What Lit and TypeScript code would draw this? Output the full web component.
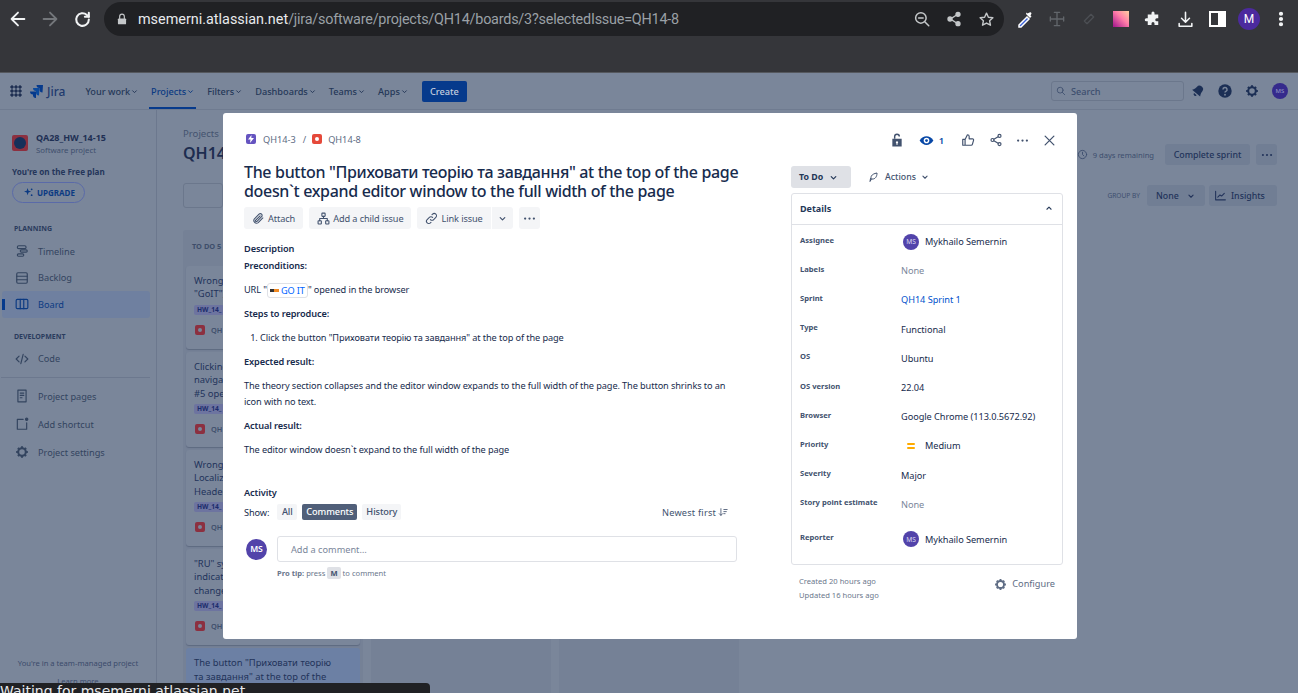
import { LitElement, html, css, svg } from "lit";
import { customElement } from "lit/decorators.js";

const icon = (w: number, body: unknown) =>
  html`<svg width=${w} height=${w} viewBox="0 0 24 24" fill="none" stroke="currentColor" stroke-width="2" stroke-linecap="round" stroke-linejoin="round">${body}</svg>`;

const gear = svg`<circle cx="12" cy="12" r="6.5" stroke-width="3.5"/><path d="M12 2v3M12 19v3M2 12h3M19 12h3M5 5l2 2M17 17l2 2M19 5l-2 2M7 17l-2 2" stroke-width="3.5" stroke-linecap="butt"/>`;
const chevron = svg`<path d="M7 10l5 5 5-5" stroke-width="2.6"/>`;
const dots = svg`<circle cx="5" cy="12" r="1.8" fill="currentColor" stroke="none"/><circle cx="12" cy="12" r="1.8" fill="currentColor" stroke="none"/><circle cx="19" cy="12" r="1.8" fill="currentColor" stroke="none"/>`;
const share = svg`<circle cx="18" cy="5" r="2.6"/><circle cx="6" cy="12" r="2.6"/><circle cx="18" cy="19" r="2.6"/><path d="M8.4 10.7l7.2-4.2M8.4 13.3l7.2 4.2"/>`;
const bugGlyph = html`<span class="bug"><i></i></span>`;

const details = [
  { label: "Labels", value: "None", kind: "none" },
  { label: "Sprint", value: "QH14 Sprint 1", kind: "link" },
  { label: "Type", value: "Functional", kind: "" },
  { label: "OS", value: "Ubuntu", kind: "" },
  { label: "OS version", value: "22.04", kind: "" },
  { label: "Browser", value: "Google Chrome (113.0.5672.92)", kind: "" },
];

const cards = [
  { lines: ["Wrong", '"GoIT")'], h: 83 },
  { lines: ["Clicking", "navigat", "#5 ope"], h: 95 },
  { lines: ["Wrong", "Localiz", "Header"], h: 96 },
  { lines: ['"RU" sy', "indicat", "change"], h: 96 },
];

@customElement("app-root")
export class AppRoot extends LitElement {
  static styles = css`
    :host {
      display: block;
      position: relative;
      width: 1298px;
      height: 693px;
      overflow: hidden;
      font-family: "Noto Sans", "Open Sans", sans-serif;
      color: #172b4d;
      background: #7a869a;
    }
    svg { display: block; flex: none; }

    /* browser */
    .chrome { height: 72px; background: #35363a; border-bottom: 1px solid #55585e; box-sizing: content-box; }
    .toolbar { display: flex; align-items: center; height: 36px; padding-top: 2px; box-sizing: border-box; color: #f1f3f4; }
    .nav-btns { display: flex; align-items: center; width: 104px; padding-left: 2px; box-sizing: border-box; flex: none; }
    .nav-btns > * { width: 32px; display: grid; place-items: center; }
    .nav-btns .off { color: #74777b; }
    .omni { flex: none; width: 900px; height: 34px; border-radius: 17px; background: #202124; display: flex; align-items: center; padding: 0 2px 0 11px; box-sizing: border-box; font: 14.4px "Roboto", sans-serif; }
    .omni .host { color: #e8eaed; margin-left: 9px; }
    .omni .path { color: #9aa0a6; letter-spacing: -0.22px; }
    .omni .right { margin-left: auto; display: flex; align-items: center; color: #c4c7c9; }
    .omni .right > * { width: 32px; display: grid; place-items: center; }
    .ext { display: flex; align-items: center; margin-left: 5px; }
    .ext > * { width: 32px; display: grid; place-items: center; flex: none; }
    .ext .dim1 { color: #62666b; }
    .ext .dim2 { color: #4c4f54; }
    .swatch { width: 16px; height: 16px; background: linear-gradient(45deg, #a0148c, #ff7ca8 55%, #ffd0a0); }
    .profile { width: 22px; height: 22px; border-radius: 50%; background: #4c2a9e; color: #fff; font: 12px "Roboto", sans-serif; display: grid; place-items: center; }

    /* jira page, dimmed */
    .page { height: 620px; display: flex; flex-direction: column; background: #7a869a; color: #25365a; }
    .topnav { height: 37px; display: flex; align-items: center; border-bottom: 1px solid #6f7b90; padding: 0 10px; font-size: 9.2px; font-weight: 500; flex: none; box-sizing: border-box; }
    .grid9 { width: 12px; height: 12px; background: radial-gradient(#1f2f52 1.5px, transparent 1.7px) 0 0 / 4px 4px; margin-right: 8px; }
    .logo { display: flex; align-items: center; gap: 3px; font-size: 12px; color: #1f3a6e; margin-right: 20px; }
    .menu { display: flex; gap: 12px; align-items: center; }
    .menu span { display: flex; align-items: center; color: #253858; position: relative; height: 36px; }
    .menu span.on { color: #0c3a82; }
    .menu span.on::after { content: ""; position: absolute; left: -2px; right: -1px; bottom: 0; height: 2px; background: #063a8c; }
    .create { margin-left: 13px; background: #063a8c; color: #c3cede; font-size: 9.2px; height: 21px; width: 45px; display: grid; place-items: center; border-radius: 2px; }
    .navright { margin-left: auto; display: flex; align-items: center; color: #1c2f55; gap: 13px; }
    .search { width: 133px; height: 20px; border: 1px solid #6b778c; border-radius: 3px; display: flex; align-items: center; gap: 5px; padding-left: 4px; box-sizing: border-box; font-size: 9.2px; color: #3d4e6e; margin-right: -6px; }
    .ava { width: 16px; height: 16px; border-radius: 50%; background: #352a8c; color: #8d8fc0; font-size: 6px; display: grid; place-items: center; }

    .body { flex: 1; display: flex; min-height: 0; }
    .side { width: 157px; flex: none; border-right: 1px solid #6c788e; box-sizing: border-box; padding-top: 21px; display: flex; flex-direction: column; font-size: 9.2px; }
    .proj { display: flex; gap: 8px; padding-left: 12px; align-items: center; }
    .proj-ic { width: 16px; height: 16px; background: #8c3040; border-radius: 2px; display: grid; place-items: center; }
    .proj-ic i { width: 12px; height: 12px; border-radius: 50%; background: #16305a; }
    .proj b { display: block; font-size: 9px; font-weight: 700; color: #1f3054; }
    .proj small { display: block; font-size: 7.8px; color: #3f4f6d; margin-top: 1px; }
    .plan { margin: 11px 0 0 12px; font-size: 8.1px; font-weight: 700; color: #25365a; }
    .upgrade { margin: 5px 0 0 12px; width: 73px; height: 21px; border: 1px solid #5a6aa8; border-radius: 11px; display: flex; align-items: center; gap: 4px; padding-left: 11px; box-sizing: border-box; font-size: 8px; font-weight: 700; color: #0c3a82; }
    .sec { margin: 21px 0 4px 14px; font-size: 7px; font-weight: 700; color: #2b3c5e; height: 10px; }
    .sec.tight { margin: 14px 0 4px 14px; }
    .item { display: flex; align-items: center; gap: 9px; height: 26.5px; margin: 0 6px 0 2px; padding-left: 13px; color: #33445f; border-radius: 3px; position: relative; flex: none; }
    .item.on { background: #6f80a0; color: #0c3a82; }
    .item.on::before { content: ""; position: absolute; left: 0; top: 8px; width: 3px; height: 11px; background: #063a8c; }
    .item.more { margin-top: 1.5px; }
    .rule { height: 1px; background: #6c788e; margin: 5px 6px 5px 1px; flex: none; }
    .team { margin-top: auto; text-align: center; font-size: 7.6px; color: #3a4b6b; padding-bottom: 7px; }
    .team div { margin-top: 8px; }

    .main { flex: 1; padding: 17px 0 0 26px; position: relative; min-width: 0; }
    .crumb { font-size: 9.6px; color: #44536f; }
    .h1 { font-size: 16px; font-weight: 600; color: #1d2d50; margin-top: 2px; line-height: 22px; width: 40px; overflow: hidden; white-space: nowrap; }
    .boardsearch { width: 40px; height: 25px; border: 1px solid #6b778c; border-radius: 3px; margin-top: 19px; box-sizing: border-box; }
    .cols { display: flex; gap: 8px; margin-top: 22px; }
    .col { width: 180px; height: 470px; background: #758196; border-radius: 3px 3px 0 0; padding: 3px 3px 0; box-sizing: border-box; flex: none; }
    .col h4 { margin: 0; font-size: 7.4px; font-weight: 700; color: #3e4e6b; padding: 8px 6px 0; height: 33px; box-sizing: border-box; }
    .card { background: #7a869a; border-radius: 3px; box-shadow: 0 1px 1px #5e6a80; padding: 8px; margin-bottom: 3px; font-size: 9.4px; line-height: 13.3px; color: #22335a; box-sizing: border-box; }
    .card.sel { background: #6c80a4; box-shadow: none; height: 60px; line-height: 14px; }
    .tag { display: block; width: fit-content; background: #6d74a0; font-size: 6.6px; line-height: 10px; font-weight: 700; padding: 0 3px; margin-top: 4px; border-radius: 2px; color: #1c2c6c; }
    .cardkey { display: flex; align-items: center; gap: 6px; margin-top: 10px; font-size: 7.4px; line-height: 10px; font-weight: 600; color: #3e4e6b; }
    .cardkey .sq { width: 10px; height: 10px; border-radius: 2px; background: #8c3040; display: grid; place-items: center; margin-left: 1px; }
    .cardkey .sq i { width: 4px; height: 4px; border-radius: 50%; background: #7a869a; }
    .right-tools { position: absolute; right: 21px; top: 34px; display: flex; align-items: center; color: #3d4e6e; }
    .remain { margin: 0 11px 0 5px; font-size: 7.6px; }
    .ghost { background: #717e94; height: 21px; border-radius: 3px; display: flex; align-items: center; padding: 0 9px; font-size: 8.8px; font-weight: 500; color: #22335a; box-sizing: border-box; }
    .ghost.sprint { width: 85px; justify-content: center; padding: 0; margin-right: 6px; }
    .ghost.square { width: 21px; justify-content: center; padding: 0; }
    .ghost.none { width: 58px; justify-content: space-between; }
    .ghost.insights { width: 68px; gap: 4px; padding: 0 5px; }
    .groupby { position: absolute; right: 21px; top: 75px; display: flex; align-items: center; gap: 4px; font-size: 6.6px; color: #3d4e6e; }
    .groupby .lab { margin-right: 3px; }

    /* the modal over the dimmed page */
    .modal {
      position: absolute; left: 223px; top: 113px; width: 854px; height: 526px;
      background: #fff; border-radius: 3px; color: #172b4d; display: flex; box-sizing: border-box;
    }
    .left { width: 568px; padding: 19px 0 0 21px; box-sizing: border-box; flex: none; }
    .crumbs { display: flex; align-items: center; font-size: 9.2px; color: #5e6c84; height: 14px; }
    .epic { width: 10px; height: 10px; background: #6554c0; border-radius: 2px; margin: 0 7px 0 2px; display: grid; place-items: center; }
    .bug { width: 10px; height: 10px; background: #e5493a; border-radius: 2px; display: grid; place-items: center; flex: none; }
    .bug i { width: 4px; height: 4px; border-radius: 50%; background: #fff; }
    .crumbs .sep { margin: 0 6px 0 7px; }
    .crumbs .bug { margin-right: 6px; }
    h1 { margin: 17px 0 0; font-size: 16px; line-height: 19px; font-weight: 500; color: #172b4d; letter-spacing: -0.33px; width: 500px; }
    .acts { display: flex; margin-top: 6px; gap: 6px; }
    .btn { display: flex; align-items: center; gap: 3px; height: 22px; padding: 0 8px; background: #f4f5f7; border-radius: 3px; font-size: 9.2px; letter-spacing: -0.1px; color: #42526e; box-sizing: border-box; }
    .split { display: flex; gap: 1px; }
    .split .btn:first-child { border-radius: 3px 0 0 3px; }
    .split .btn:last-child { border-radius: 0 3px 3px 0; padding: 0 5px; }
    .btn.more { padding: 0 3px; }
    .desc { font-size: 9.2px; letter-spacing: -0.1px; line-height: 16px; color: #172b4d; width: 493px; margin-top: 12px; }
    .desc b { display: block; font-weight: 600; }
    .desc p { margin: 0; }
    .desc .t1 { margin-top: 1px; }
    .gap { margin-top: 8px !important; }
    .smart { display: inline-flex; align-items: center; gap: 2px; border: 1px solid #dfe1e6; border-radius: 3px; padding: 0 2px; color: #0065ff; height: 13px; line-height: 13px; vertical-align: middle; }
    .flag { width: 9px; height: 3px; background: linear-gradient(90deg, #333 50%, #f08a24 50%); display: inline-block; }
    ol { margin: 8px 0 0; padding-left: 16px; }
    .desc b.activity { margin-top: 27px; }
    .show { display: flex; align-items: center; gap: 5px; margin-top: 3px; height: 16px; width: 493px; font-size: 9.2px; letter-spacing: -0.1px; color: #172b4d; }
    .show span { margin-right: 3px; }
    .tab { background: #f4f5f7; border-radius: 2px; padding: 0 4px; height: 16px; line-height: 16px; color: #42526e; font-weight: 500; min-width: 20px; box-sizing: border-box; text-align: center; }
    .tab.on { background: #505f79; color: #fff; }
    .newest { margin-left: auto; color: #42526e; display: flex; align-items: center; gap: 2px; margin-right: 9px; letter-spacing: 0.2px; }
    .comment { display: flex; margin-top: 16px; gap: 10px; align-items: center; width: 493px; padding-left: 2px; box-sizing: border-box; }
    .avatar { background: #5243aa; color: #fff; border-radius: 50%; display: grid; place-items: center; flex: none; font-weight: 600; }
    .avatar.lg { width: 21px; height: 21px; font-size: 8.6px; }
    .avatar.sm { width: 16px; height: 16px; font-size: 6.6px; font-weight: 400; color: #dcd8f0; }
    .input { flex: 1; height: 26px; border: 1px solid #dfe1e6; border-radius: 3px; padding-left: 13px; display: flex; align-items: center; font-size: 9.2px; color: #7a869a; box-sizing: border-box; }
    .tip { margin: 5px 0 0 33px; font-size: 7.6px; color: #6b778c; display: flex; align-items: center; gap: 2px; }
    .tip b { font-weight: 700; }
    .tip kbd { background: #dfe1e6; font: 700 7.6px "Noto Sans", sans-serif; color: #42526e; padding: 1px 3px; border-radius: 2px; }

    .rightcol { width: 286px; flex: none; padding: 0 14px 0 0; box-sizing: border-box; }
    .tools { display: flex; align-items: center; justify-content: flex-end; height: 14px; margin-top: 20px; color: #42526e; padding-right: 6px; }
    .tools > * { margin-left: 12px; }
    .tools .shr { margin-left: 14px; }
    .eye { display: flex; align-items: center; gap: 5px; color: #0747a6; font-size: 9.4px; font-weight: 600; margin-left: 15px; margin-right: 5px; }
    .status { display: flex; align-items: center; margin-top: 19px; height: 22px; }
    .todo { width: 60px; height: 22px; background: #dfe1e6; border-radius: 3px; display: flex; align-items: center; gap: 5px; padding-left: 8px; box-sizing: border-box; font-size: 8.8px; font-weight: 700; color: #253858; }
    .actions { display: flex; align-items: center; gap: 4px; margin-left: 16px; font-size: 8.8px; color: #42526e; font-weight: 500; }
    .actions span { margin-left: 2px; }
    .panel { margin-top: 5px; width: 272px; height: 372px; border: 1px solid #dfe1e6; border-radius: 3px; box-sizing: border-box; }
    .panel-h { height: 31px; border-bottom: 1px solid #dfe1e6; display: flex; align-items: center; justify-content: space-between; padding: 0 8px 2px; font-size: 9px; font-weight: 700; color: #253858; box-sizing: border-box; }
    .rows { padding: 2px 8px 0; }
    .row { display: flex; height: 29.2px; align-items: center; font-size: 9.2px; letter-spacing: -0.05px; }
    .row label { width: 101px; font-size: 7.6px; font-weight: 700; color: #42526e; flex: none; transform: translateY(-2px); letter-spacing: 0; }
    .row .val { display: flex; align-items: center; gap: 6px; color: #172b4d; }
    .row .val.none { color: #7a869a; }
    .row .val.link { color: #0052cc; }
    .row .val .avatar, .row .val .prio { margin-left: 2px; }
    .prio { width: 16px; display: flex; flex-direction: column; align-items: center; gap: 2px; }
    .prio i { width: 8px; height: 1.6px; background: #ffab00; border-radius: 1px; }
    .row.rep { margin-top: 6px; }
    .foot { display: flex; justify-content: space-between; align-items: flex-start; padding: 9px 8px 0; width: 272px; box-sizing: border-box; color: #6b778c; font-size: 7.6px; line-height: 14px; }
    .conf { display: flex; align-items: center; gap: 5px; font-size: 9.2px; color: #5e6c84; margin-top: 3px; }

    .statusbar { position: absolute; left: 0; bottom: 0; width: 430px; height: 10px; background: #202124; border-radius: 0 4px 0 0; color: #e8eaed; font: 14px "DejaVu Sans", sans-serif; overflow: hidden; white-space: nowrap; line-height: 16px; }
  `;

  private nav(label: string, on = false) {
    return html`<span class=${on ? "on" : ""}>${label}${icon(9, chevron)}</span>`;
  }

  private renderChrome() {
    return html`<div class="chrome">
      <div class="toolbar">
        <div class="nav-btns">
          <span>${icon(22, svg`<path d="M19 12H5M12 5l-7 7 7 7"/>`)}</span>
          <span class="off">${icon(22, svg`<path d="M5 12h14M12 5l7 7-7 7"/>`)}</span>
          <span>${icon(19, svg`<path d="M20 12a8 8 0 1 1-2.5-5.8L20 8.5" stroke-width="2.6"/><path d="M20 3.5v5h-5" stroke-width="2.6"/>`)}</span>
        </div>
        <div class="omni">
          ${icon(14, svg`<rect x="5" y="11" width="14" height="10" rx="1.5" fill="#c4c7c9" stroke="none"/><path d="M8 11V7.5a4 4 0 0 1 8 0V11" stroke="#c4c7c9"/>`)}
          <span class="host">msemerni.atlassian.net</span><span class="path">/jira/software/projects/QH14/boards/3?selectedIssue=QH14-8</span>
          <div class="right">
            <span>${icon(18, svg`<circle cx="10.5" cy="10.5" r="7"/><path d="M7.5 10.5h6M16 16l5 5"/>`)}</span>
            <span>${icon(16, svg`<circle cx="18" cy="5" r="3" fill="currentColor"/><circle cx="6" cy="12" r="3" fill="currentColor"/><circle cx="18" cy="19" r="3" fill="currentColor"/><path d="M8 11l8-5M8 13l8 5"/>`)}</span>
            <span>${icon(17, svg`<path d="M12 3l2.7 5.8 6.3.8-4.6 4.3 1.2 6.2L12 17l-5.600 3.100 1.200-6.200L3 9.600l6.300-.8z"/>`)}</span>
          </div>
        </div>
        <div class="ext">
          <span><svg width="18" height="18" viewBox="0 0 18 18"><path d="M3 15l8-8 2 2-8 8H3z" fill="#3b62d8" stroke="#fff" stroke-width="1.5"/><path d="M10 4l4 4 1.5-1.5-1-1 1-2a1.5 1.5 0 0 0-2-1l-2 1-1-1z" fill="#fff"/></svg></span>
          <span class="dim1">${icon(16, svg`<path d="M12 2v20M2 12h20M8 2h8M8 22h8M2 9v6M22 9v6"/>`)}</span>
          <span class="dim2">${icon(16, svg`<path d="M5 15L15 5M9 19L19 9M5 15l4 4M15 5l4 4"/>`)}</span>
          <span><div class="swatch"></div></span>
          <span>${icon(18, svg`<path d="M10 4a2 2 0 0 1 4 0v2h5v5h-2a2 2 0 0 0 0 4h2v5h-5v-2a2 2 0 0 0-4 0v2H5v-5H3a2 2 0 0 1 0-4h2V6h5z" fill="currentColor" stroke="none"/>`)}</span>
          <span>${icon(19, svg`<path d="M12 3v12M7 10.5l5 5 5-5M4 17v3.5h16V17"/>`)}</span>
          <span><svg width="17" height="16" viewBox="0 0 17 16"><rect x="1" y="1" width="15" height="14" fill="none" stroke="#fff" stroke-width="2"/><rect x="9" y="1" width="7" height="14" fill="#fff"/></svg></span>
          <span><div class="profile">M</div></span>
          <span>${icon(18, svg`<circle cx="12" cy="5" r="1.8" fill="currentColor"/><circle cx="12" cy="12" r="1.8" fill="currentColor"/><circle cx="12" cy="19" r="1.8" fill="currentColor"/>`)}</span>
        </div>
      </div>
    </div>`;
  }

  private renderNav() {
    return html`<div class="topnav">
      <div class="grid9"></div>
      <div class="logo">
        <svg width="14" height="14" viewBox="0 0 14 14"><path d="M13 1H6.5a3 3 0 0 0 3 3v1.5a3 3 0 0 0 3 3z" fill="#063a8c"/><path d="M9.5 4H3a3 3 0 0 0 3 3v1.5a3 3 0 0 0 3 3z" fill="#0c4a9c"/><path d="M6 7.5H0a3 3 0 0 0 3 3V12a3 3 0 0 0 3 2z" fill="#063a8c"/></svg>
        Jira
      </div>
      <div class="menu">
        ${this.nav("Your work")}${this.nav("Projects", true)}${this.nav("Filters")}${this.nav("Dashboards")}${this.nav("Teams")}${this.nav("Apps")}
      </div>
      <div class="create">Create</div>
      <div class="navright">
        <div class="search">${icon(10, svg`<circle cx="10" cy="10" r="7"/><path d="M15 15l6 6"/>`)}Search</div>
        <svg width="14" height="14" viewBox="0 0 24 24" fill="currentColor"><g transform="rotate(40 12 12)"><path d="M12 2a6 6 0 0 0-6 6c0 5-2 7-3 9h18c-1-2-3-4-3-9a6 6 0 0 0-6-6z"/><path d="M9 19a3 3 0 0 0 6 0z"/></g></svg>
        <svg width="14" height="14" viewBox="0 0 24 24"><circle cx="12" cy="12" r="11.5" fill="currentColor"/><path d="M8.5 9.5a3.5 3.5 0 1 1 5 3.2c-1 .5-1.5 1-1.5 2" fill="none" stroke="#7a869a" stroke-width="2.6"/><circle cx="12" cy="18.5" r="1.6" fill="#7a869a"/></svg>
        ${icon(14, gear)}
        <div class="ava">MS</div>
      </div>
    </div>`;
  }

  private renderSide() {
    return html`<aside class="side">
      <div class="proj">
        <div class="proj-ic"><i></i></div>
        <div><b>QA28_HW_14-15</b><small>Software project</small></div>
      </div>
      <div class="plan">You're on the Free plan</div>
      <div class="upgrade">
        <svg width="9" height="9" viewBox="0 0 10 10" fill="#0c3a82"><path d="M4 0l1 3 3 1-3 1-1 3-1-3-3-1 3-1z"/><circle cx="8.5" cy="1.5" r="1"/><circle cx="8.5" cy="8" r="1"/></svg>
        UPGRADE
      </div>
      <div class="sec">PLANNING</div>
      <div class="item">${icon(14, svg`<rect x="4" y="3" width="15" height="5" rx="2.5"/><rect x="9" y="10" width="12" height="4" rx="2"/><rect x="4" y="17" width="11" height="4" rx="2"/>`)}Timeline</div>
      <div class="item">${icon(14, svg`<path d="M3 9h18M3 15h18"/><rect x="3" y="3" width="18" height="18" rx="2"/>`)}Backlog</div>
      <div class="item on">${icon(14, svg`<rect x="2" y="4" width="20" height="16" rx="2"/><path d="M9 4v16M15 4v16"/>`)}Board</div>
      <div class="sec tight">DEVELOPMENT</div>
      <div class="item">${icon(14, svg`<path d="M7 7l-5 5 5 5M17 7l5 5-5 5M14 4l-4 16"/>`)}Code</div>
      <div class="rule"></div>
      <div class="item">${icon(14, svg`<path d="M5 2h14v20H5z"/><path d="M9 7h6M9 11h6M9 15h3"/>`)}Project pages</div>
      <div class="item more">${icon(14, svg`<path d="M14 4H4v17h16V10"/><circle cx="20" cy="4" r="2" fill="currentColor"/>`)}Add shortcut</div>
      <div class="item more">${icon(14, gear)}Project settings</div>
      <div class="team">You're in a team-managed project<div>Learn more</div></div>
    </aside>`;
  }

  private renderBoard() {
    return html`<main class="main">
      <div class="crumb">Projects</div>
      <div class="h1">QH14</div>
      <div class="boardsearch"></div>
      <div class="cols">
        <div class="col">
          <h4>TO DO 5</h4>
          ${cards.map(
            (c) => html`<div class="card" style="height:${c.h}px">
              ${c.lines.map((l) => html`<div>${l}</div>`)}
              <span class="tag">HW_14_</span>
              <div class="cardkey"><span class="sq"><i></i></span>QH</div>
            </div>`
          )}
          <div class="card sel">The button "Приховати теорію<br />та завдання" at the top of the</div>
        </div>
        <div class="col"></div>
        <div class="col"></div>
      </div>
      <div class="right-tools">
        ${icon(11, svg`<circle cx="12" cy="12" r="9"/><path d="M12 7v5l3 3"/>`)}
        <span class="remain">9 days remaining</span>
        <div class="ghost sprint">Complete sprint</div>
        <div class="ghost square">${icon(14, dots)}</div>
      </div>
      <div class="groupby">
        <span class="lab">GROUP BY</span>
        <div class="ghost none">None${icon(10, chevron)}</div>
        <div class="ghost insights">${icon(13, svg`<path d="M3 4v16h18M7 15l4-4 3 2 5-5"/>`)}Insights</div>
      </div>
    </main>`;
  }

  private renderDetails() {
    return html`<div class="panel">
      <div class="panel-h">Details${icon(10, svg`<path d="M7 15l5-5 5 5" stroke-width="2.6"/>`)}</div>
      <div class="rows">
        <div class="row"><label>Assignee</label><div class="val"><div class="avatar sm">MS</div>Mykhailo Semernin</div></div>
        ${details.map((d) => html`<div class="row"><label>${d.label}</label><div class="val ${d.kind}">${d.value}</div></div>`)}
        <div class="row"><label>Priority</label><div class="val"><div class="prio"><i></i><i></i></div>Medium</div></div>
        <div class="row"><label>Severity</label><div class="val">Major</div></div>
        <div class="row"><label>Story point estimate</label><div class="val none">None</div></div>
        <div class="row rep"><label>Reporter</label><div class="val"><div class="avatar sm">MS</div>Mykhailo Semernin</div></div>
      </div>
    </div>`;
  }

  private renderModal() {
    return html`<section class="modal">
      <div class="left">
        <div class="crumbs">
          <span class="epic"><svg width="6" height="8" viewBox="0 0 6 8"><path d="M3.5 0L0 4.5h2.5L2 8l4-5H3.300z" fill="#fff"/></svg></span>QH14-3<span class="sep">/</span>${bugGlyph}QH14-8
        </div>
        <h1>The button "Приховати теорію та завдання" at the top of the page doesn\`t expand editor window to the full width of the page</h1>
        <div class="acts">
          <div class="btn">${icon(13, svg`<path d="M20 11l-8.5 8.5a5 5 0 0 1-7-7L13 4a3.3 3.3 0 0 1 4.700 4.700l-8.500 8.500a1.600 1.600 0 0 1-2.300-2.300L15 7"/>`)}Attach</div>
          <div class="btn">${icon(13, svg`<rect x="9" y="2" width="6" height="6" rx="1"/><rect x="2" y="16" width="6" height="6" rx="1"/><rect x="16" y="16" width="6" height="6" rx="1"/><path d="M12 8v4M5 16v-4h14v4"/>`)}Add a child issue</div>
          <div class="split">
            <div class="btn">${icon(13, svg`<path d="M10 14a4 4 0 0 0 6 0l4-4a4 4 0 0 0-6-6l-1 1M14 10a4 4 0 0 0-6 0l-4 4a4 4 0 0 0 6 6l1-1"/>`)}Link issue</div>
            <div class="btn">${icon(11, chevron)}</div>
          </div>
          <div class="btn more">${icon(15, dots)}</div>
        </div>
        <div class="desc">
          <b>Description</b>
          <b class="t1">Preconditions:</b>
          <p class="gap">URL "<span class="smart"><i class="flag"></i>GO IT</span>" opened in the browser</p>
          <b class="gap">Steps to reproduce:</b>
          <ol><li>Click the button "Приховати теорію та завдання" at the top of the page</li></ol>
          <b class="gap">Expected result:</b>
          <p class="gap">The theory section collapses and the editor window expands to the full width of the page. The button shrinks to an icon with no text.</p>
          <b class="gap">Actual result:</b>
          <p class="gap">The editor window doesn\`t expand to the full width of the page</p>
          <b class="activity">Activity</b>
        </div>
        <div class="show">
          <span>Show:</span>
          <div class="tab">All</div><div class="tab on">Comments</div><div class="tab">History</div>
          <div class="newest">Newest first ${icon(10, svg`<path d="M7 4v16M3 16l4 4 4-4M14 6h8M14 11h6M14 16h3"/>`)}</div>
        </div>
        <div class="comment">
          <div class="avatar lg">MS</div>
          <div class="input">Add a comment…</div>
        </div>
        <div class="tip"><b>Pro tip:</b> press <kbd>M</kbd> to comment</div>
      </div>
      <div class="rightcol">
        <div class="tools">
          <svg width="14" height="14" viewBox="0 0 24 24" fill="currentColor"><path fill-rule="evenodd" d="M4 10h16v13H4zM12 14a2 2 0 0 0-1 3.7V20h2v-2.3A2 2 0 0 0 12 14z"/><path d="M8 10V6a4 4 0 0 1 8 0" fill="none" stroke="currentColor" stroke-width="2.5"/></svg>
          <div class="eye"><svg width="15" height="15" viewBox="0 0 24 24"><path d="M1 12c3-5 7-7 11-7s8 2 11 7c-3 5-7 7-11 7s-8-2-11-7z" fill="currentColor"/><circle cx="12" cy="12" r="4.5" fill="#fff"/><circle cx="12" cy="12" r="2.2" fill="currentColor"/></svg>1</div>
          ${icon(14, svg`<path d="M3 11h4v10H3zM7 11l4-8c2 0 3 1 3 3v4h6c1 0 2 1 1.5 2.5l-2 7c-.3 1-1 1.5-2 1.5H7"/>`)}
          <span class="shr">${icon(14, share)}</span>
          ${icon(15, dots)}
          ${icon(15, svg`<path d="M5 5l14 14M19 5L5 19"/>`)}
        </div>
        <div class="status">
          <div class="todo">To Do ${icon(11, chevron)}</div>
          <div class="actions">
            ${icon(12, svg`<path d="M9 16c-3-3-1-10 11-12 0 8-4 12-8 12zM9 16l-3 5 1-6"/>`)}
            <span>Actions</span>${icon(10, chevron)}
          </div>
        </div>
        ${this.renderDetails()}
        <div class="foot">
          <div>Created 20 hours ago<br />Updated 16 hours ago</div>
          <div class="conf">${icon(13, gear)}Configure</div>
        </div>
      </div>
    </section>`;
  }

  render() {
    return html`
      ${this.renderChrome()}
      <div class="page">
        ${this.renderNav()}
        <div class="body">${this.renderSide()}${this.renderBoard()}</div>
      </div>
      ${this.renderModal()}
      <div class="statusbar">Waiting for msemerni.atlassian.net</div>
    `;
  }
}
